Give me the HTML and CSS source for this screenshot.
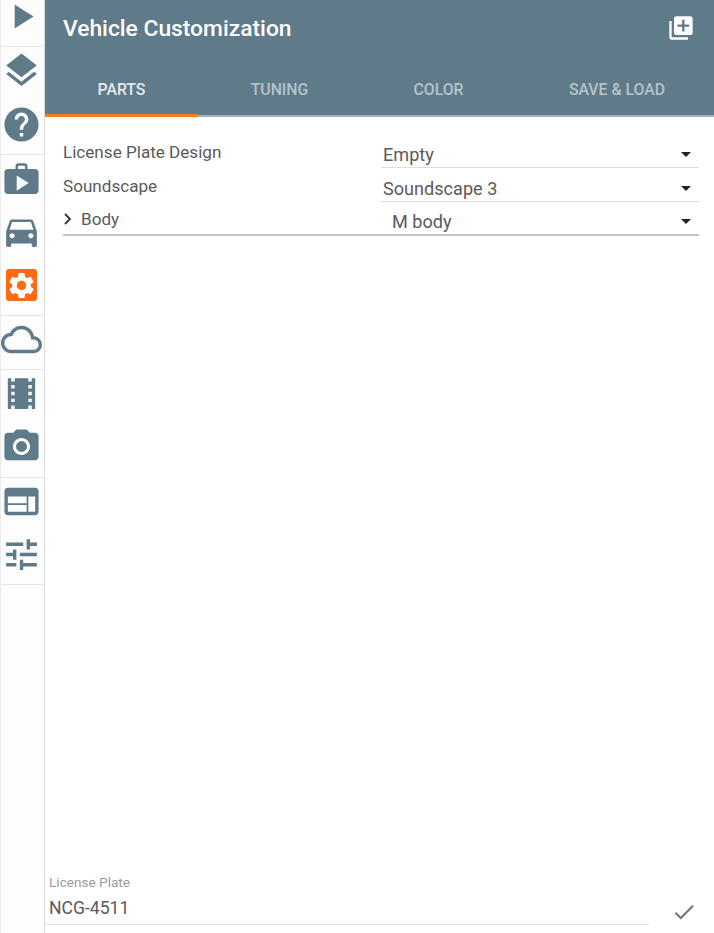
FILE: index.html
```html
<!DOCTYPE html>
<html lang="en">
<head>
  <meta charset="UTF-8" />
  <meta name="viewport" content="width=device-width, initial-scale=1.0"/>
  <title>Vehicle Customization</title>
  <link rel="stylesheet" href="styles.css">
</head>
<body>
  <nav class="rail">
    <div class="rail-group">
      <a class="rail-item"><svg class="rail-icon" viewBox="0 0 24 24"><path d="M8 5v14l11-7z"/></svg></a>
    </div>
    <div class="rail-group">
      <a class="rail-item"><svg class="rail-icon" viewBox="0 0 24 24"><path d="M11.99 18.54l-7.37-5.73L3 14.07l9 7 9-7-1.63-1.27-7.38 5.74zM12 16l7.36-5.73L21 9l-9-7-9 7 1.63 1.27L12 16z"/></svg></a>
      <a class="rail-item"><svg class="rail-icon" viewBox="0 0 24 24"><path d="M12 2C6.48 2 2 6.48 2 12s4.48 10 10 10 10-4.48 10-10S17.52 2 12 2zm1 17h-2v-2h2v2zm2.07-7.75l-.9.92C13.45 12.9 13 13.5 13 15h-2v-.5c0-1.1.45-2.1 1.17-2.83l1.24-1.26c.37-.36.59-.86.59-1.41 0-1.1-.9-2-2-2s-2 .9-2 2H8c0-2.21 1.79-4 4-4s4 1.79 4 4c0 .88-.36 1.68-.93 2.25z"/></svg></a>
    </div>
    <div class="rail-group">
      <a class="rail-item"><svg class="rail-icon" viewBox="0 0 24 24"><path fill-rule="evenodd" d="M4 6.5h4.5v-2c0-.8.7-1.5 1.5-1.5h4c.8 0 1.5.7 1.5 1.5v2H20c1.1 0 2 .9 2 2V19c0 1.1-.9 2-2 2H4c-1.1 0-2-.9-2-2V8.500c0-1.100.9-2 2-2zM10 6.500h4v-2h-4zM9.200 10.300v8.800l7-4.400z"/></svg></a>
      <a class="rail-item"><svg class="rail-icon" viewBox="0 0 24 24"><path d="M18.920 6.010C18.720 5.420 18.160 5 17.500 5h-11c-.66 0-1.210.42-1.420 1.010L3 12v8c0 .55.45 1 1 1h1c.55 0 1-.45 1-1v-1h12v1c0 .55.45 1 1 1h1c.55 0 1-.45 1-1v-8l-2.080-5.990zM6.500 16c-.83 0-1.500-.67-1.500-1.500S5.670 13 6.500 13s1.500.67 1.500 1.500S7.330 16 6.500 16zm11 0c-.83 0-1.500-.67-1.500-1.500s.67-1.500 1.500-1.500 1.500.67 1.500 1.500-.67 1.500-1.500 1.500zM5 11l1.500-4.500h11L19 11H5z"/></svg></a>
      <a class="rail-item"><span class="gear-box"><svg class="gear-icon" viewBox="0 0 24 24"><path d="M19.140 12.940c.04-.3.06-.61.06-.94 0-.32-.02-.64-.07-.94l2.030-1.580c.18-.14.23-.41.12-.61l-1.920-3.320c-.12-.22-.37-.29-.59-.22l-2.390.96c-.5-.38-1.030-.7-1.620-.94l-.36-2.540c-.04-.24-.24-.41-.48-.41h-3.840c-.24 0-.43.17-.47.41l-.36 2.540c-.59.24-1.130.57-1.620.94l-2.390-.96c-.22-.08-.47 0-.59.22L2.740 8.870c-.12.21-.08.47.12.61l2.030 1.580c-.05.3-.09.63-.09.94s.02.64.07.94l-2.030 1.580c-.18.14-.23.41-.12.61l1.920 3.320c.12.22.37.29.59.22l2.390-.96c.5.38 1.030.7 1.620.94l.36 2.540c.05.24.24.41.48.41h3.840c.24 0 .44-.17.47-.41l.36-2.540c.59-.24 1.130-.56 1.620-.94l2.390.96c.22.08.47 0 .59-.22l1.920-3.320c.12-.22.07-.47-.12-.61l-2.010-1.580zM12 15.600c-1.980 0-3.600-1.620-3.600-3.600s1.620-3.600 3.600-3.600 3.600 1.620 3.600 3.600-1.620 3.600-3.600 3.600z"/></svg></span></a>
    </div>
    <div class="rail-group">
      <a class="rail-item"><svg class="rail-icon" viewBox="0 0 24 24"><path d="M19.350 10.040C18.670 6.590 15.640 4 12 4 9.110 4 6.600 5.640 5.350 8.040 2.340 8.360 0 10.910 0 14c0 3.310 2.690 6 6 6h13c2.760 0 5-2.240 5-5 0-2.640-2.050-4.780-4.650-4.960zM19 18H6c-2.210 0-4-1.790-4-4 0-2.050 1.530-3.760 3.560-3.970l1.070-.11.5-.95C8.080 7.140 9.940 6 12 6c2.620 0 4.880 1.860 5.390 4.430l.3 1.500 1.530.11c1.560.1 2.780 1.410 2.780 2.960 0 1.650-1.350 3-3 3z"/></svg></a>
    </div>
    <div class="rail-group">
      <a class="rail-item"><svg class="rail-icon" viewBox="0 0 24 24"><path d="M18 3v2h-2V3H8v2H6V3H4v18h2v-2h2v2h8v-2h2v2h2V3h-2zM8 17H6v-2h2v2zm0-4H6v-2h2v2zm0-4H6V7h2v2zm10 8h-2v-2h2v2zm0-4h-2v-2h2v2zm0-4h-2V7h2v2z"/></svg></a>
      <a class="rail-item"><svg class="rail-icon" viewBox="0 0 24 24"><circle cx="12" cy="12" r="3.200"/><path d="M9 2L7.170 4H4c-1.100 0-2 .9-2 2v12c0 1.100.9 2 2 2h16c1.100 0 2-.9 2-2V6c0-1.100-.9-2-2-2h-3.170L15 2H9zm3 15c-2.760 0-5-2.240-5-5s2.240-5 5-5 5 2.240 5 5-2.240 5-5 5z"/></svg></a>
    </div>
    <div class="rail-group">
      <a class="rail-item"><svg class="rail-icon" viewBox="0 0 24 24"><path d="M20 4H4c-1.100 0-1.990.9-1.990 2L2 18c0 1.100.9 2 2 2h16c1.100 0 2-.9 2-2V6c0-1.100-.9-2-2-2zm-5 14H4v-4h11v4zm0-5H4V9h11v4zm5 5h-4V9h4v9z"/></svg></a>
      <a class="rail-item"><svg class="rail-icon" viewBox="0 0 24 24"><path d="M3 17v2h6v-2H3zM3 5v2h10V5H3zm10 16v-2h8v-2h-8v-2h-2v6h2zM7 9v2H3v2h4v2h2V9H7zm14 4v-2H11v2h10zm-6-4h2V7h4V5h-4V3h-2v6z"/></svg></a>
    </div>
  </nav>

  <main class="panel">
    <header class="panel-header">
      <div class="title-bar">
        <h1 class="panel-title">Vehicle Customization</h1>
        <svg class="title-action" viewBox="0 0 24 24"><path d="M4 6H2v14c0 1.100.9 2 2 2h14v-2H4V6zm16-4H8c-1.100 0-2 .9-2 2v12c0 1.100.9 2 2 2h12c1.100 0 2-.9 2-2V4c0-1.100-.9-2-2-2zm-1 9h-4v4h-2v-4H9V9h4V5h2v4h4v2z"/></svg>
      </div>
      <div class="tabs">
        <a class="tab tab-active">Parts</a>
        <a class="tab">Tuning</a>
        <a class="tab">Color</a>
        <a class="tab">Save &amp; Load</a>
      </div>
    </header>

    <section class="form-list">
      <div class="form-row">
        <span class="form-label">License Plate Design</span>
        <div class="select"><span>Empty</span><i class="caret"></i></div>
      </div>
      <div class="form-row">
        <span class="form-label">Soundscape</span>
        <div class="select"><span>Soundscape 3</span><i class="caret"></i></div>
      </div>
      <div class="form-row form-row-group">
        <span class="form-label">
          <svg class="chevron" viewBox="0 0 10 14"><path d="M2 2l5 5-5 5" /></svg>
          Body
        </span>
        <div class="select select-nested"><span>M body</span><i class="caret"></i></div>
      </div>
    </section>

    <footer class="plate">
      <div class="plate-field">
        <label class="plate-label">License Plate</label>
        <div class="plate-value">NCG-4511</div>
      </div>
      <svg class="plate-check" viewBox="0 0 24 24"><path d="M9 16.170L4.830 12l-1.420 1.410L9 19 21 7l-1.410-1.410z"/></svg>
    </footer>
  </main>
</body>
</html>
```

FILE: styles.css
```css
html, body {
  height: 100%;
}

body {
  font-family: 'Roboto', sans-serif;
  background-color: #ffffff;
  color: #555;
  display: flex;
  margin: 0;
  overflow: hidden;
}

.rail {
  flex: 0 0 45px;
  box-sizing: border-box;
  margin-top: -7px;
  height: calc(100% + 7px);
  background-color: #fdfdfd;
  border-left: 1px solid #ececec;
  border-right: 1px solid #dcdcdc;
}

.rail-group {
  border-bottom: 1px solid #e4e4e4;
}

.rail-item {
  display: flex;
  justify-content: center;
  align-items: flex-start;
  box-sizing: border-box;
  height: 53.3px;
  padding: 3px 2px 0 0;
}

.rail-icon {
  display: block;
  width: 41px;
  height: 41px;
  flex: none;
  fill: #5f7a88;
}

.gear-box {
  display: flex;
  justify-content: center;
  align-items: center;
  width: 31px;
  height: 32px;
  margin-top: 5px;
  background-color: #ff6a13;
  border-radius: 3px;
}

.gear-icon {
  width: 31px;
  height: 31px;
  fill: #ffffff;
}

.panel {
  flex: 1;
  min-width: 0;
  display: flex;
  flex-direction: column;
}

.panel-header {
  background-color: #5f7a88;
  height: 117px;
  display: flex;
  flex-direction: column;
  box-sizing: border-box;
}

.title-bar {
  display: flex;
  justify-content: space-between;
  align-items: center;
  height: 56px;
  padding: 0 19px 0 18px;
}

.panel-title {
  margin: 0;
  font-size: 22.800px;
  font-weight: 500;
  color: #ffffff;
}

.title-action {
  width: 28px;
  height: 28px;
  fill: #ffffff;
}

.tabs {
  display: grid;
  grid-template-columns: 153px 163px 155px 1fr;
  margin-top: auto;
  height: 61px;
  border-bottom: 2px solid #a0b2bc;
  box-sizing: border-box;
}

.tab {
  display: flex;
  justify-content: center;
  align-items: center;
  padding-top: 8px;
  margin-bottom: -2px;
  font-size: 15.800px;
  font-weight: 500;
  text-transform: uppercase;
  color: #b5c3cb;
  white-space: nowrap;
  border-bottom: 3px solid transparent;
}

.tab:last-child {
  padding-left: 4px;
}

.tab-active {
  color: #e6ebee;
  border-bottom-color: #f57c1f;
}

.form-list {
  display: flex;
  flex-direction: column;
  padding: 17px 15px 0 18px;
}

.form-row {
  display: flex;
  height: 34px;
  box-sizing: border-box;
}

.form-row-group {
  border-bottom: 2px solid #c4c4c4;
}

.form-label {
  flex: 0 0 318px;
  display: flex;
  align-items: center;
  box-sizing: border-box;
  padding-top: 2px;
  font-size: 17.100px;
  color: #5a5a5a;
}

.chevron {
  width: 10px;
  height: 14px;
  margin-right: 8px;
  fill: none;
  stroke: #333;
  stroke-width: 1.800;
}

.select {
  flex: 1;
  display: flex;
  justify-content: space-between;
  align-items: center;
  box-sizing: border-box;
  padding: 7px 8px 0 2px;
  border-bottom: 1px solid #dedede;
  font-size: 18.100px;
  color: #5a5a5a;
}

.select-nested {
  padding-left: 11px;
  border-bottom: none;
}

.caret {
  width: 0;
  height: 0;
  border-left: 5px solid transparent;
  border-right: 5px solid transparent;
  border-top: 5px solid #222;
}

.plate {
  margin-top: auto;
  display: flex;
  align-items: flex-end;
  padding-left: 1px;
  height: 66px;
  box-sizing: border-box;
}

.plate-field {
  width: 603px;
  height: 58px;
  padding: 0 0 0 3px;
  box-sizing: border-box;
  border-bottom: 1px solid #dedede;
  margin-bottom: 8px;
}

.plate-label {
  display: block;
  font-size: 13.600px;
  color: #9a9a9a;
  margin-top: 7px;
}

.plate-value {
  margin-top: 8px;
  font-size: 17.600px;
  color: #5a5a5a;
}

.plate-check {
  width: 26px;
  height: 26px;
  margin: 0 0 8px 22px;
  fill: #777;
}
```
